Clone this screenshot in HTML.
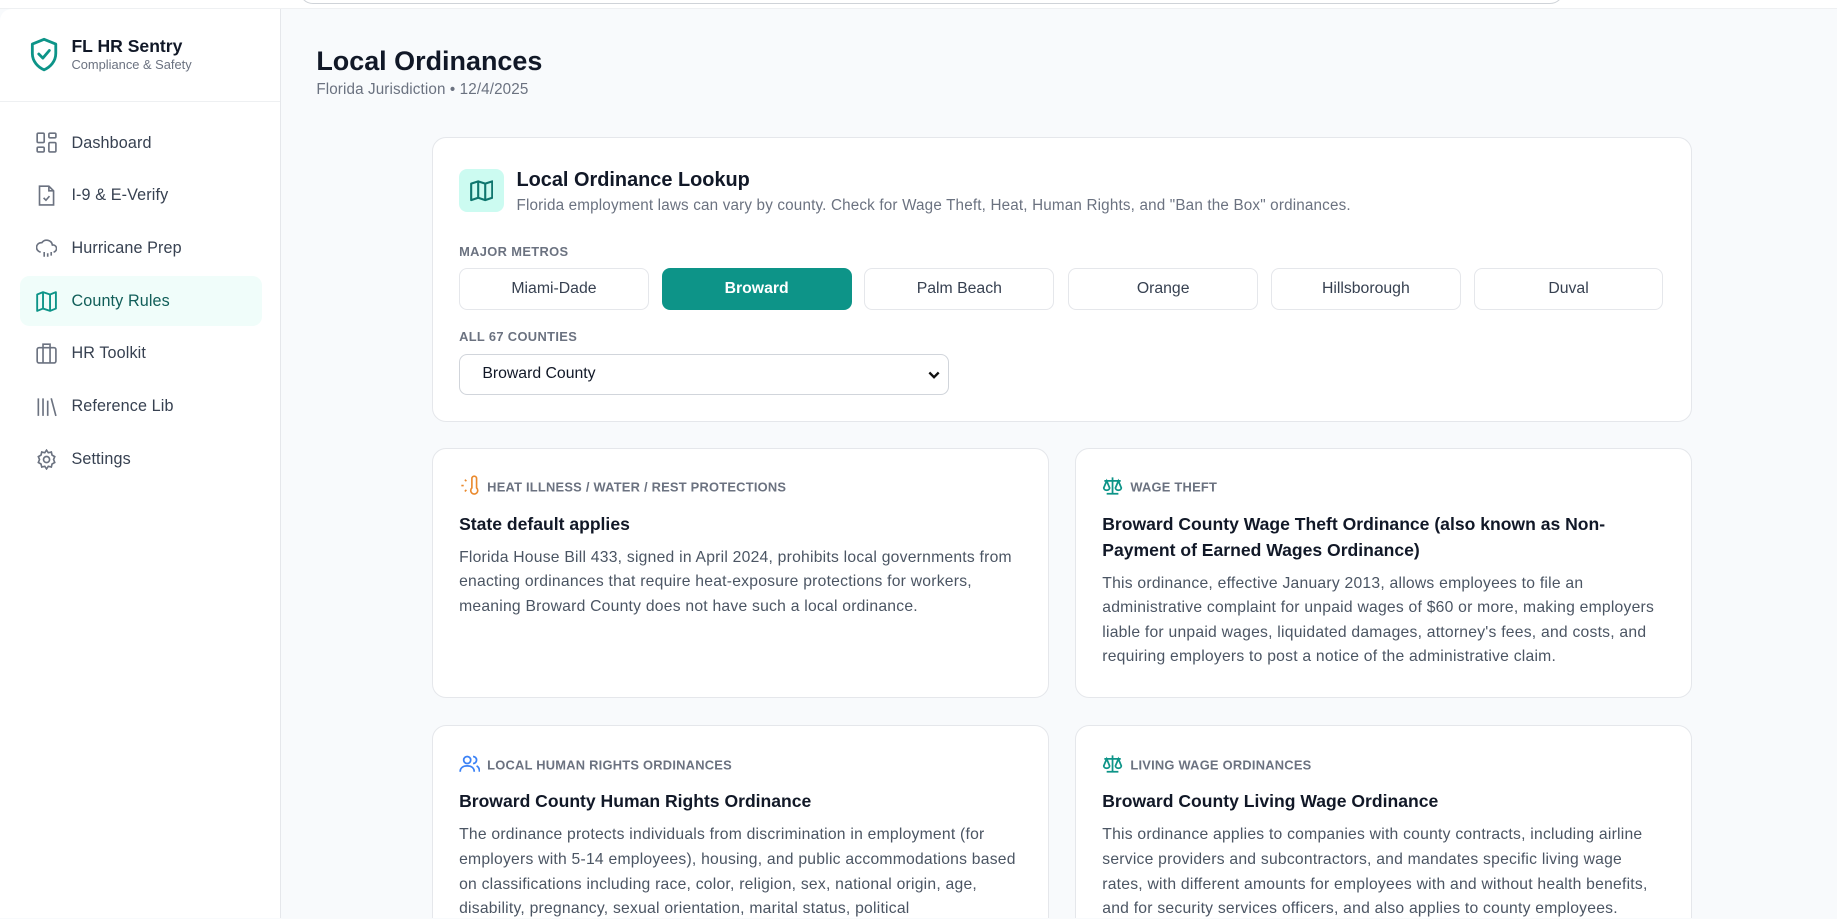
<!DOCTYPE html>
<html><head><meta charset="utf-8">
<style>
html{zoom:1.17156;overflow:hidden;height:784px}
*{box-sizing:border-box;margin:0;padding:0}
body{width:1568px;height:784px;overflow:hidden;background:#f8fafc;font-family:"Liberation Sans",Arial,sans-serif;color:#111827;position:relative}
.top{position:absolute;left:0;top:0;width:1568px;height:8px;background:#fff;border-bottom:1px solid #eef0f2}
.top .bar{position:absolute;left:255px;top:-20px;width:1080px;height:23px;border:1px solid #cfd3d8;border-radius:0 0 12px 12px;background:#fff}
.side{position:absolute;left:0;top:8px;width:240px;height:776px;background:#fff;border-right:1px solid #e5e7eb;border-top-left-radius:10px}
.brand{height:79px;border-bottom:1px solid #eef0f2;position:relative}
.brand svg{position:absolute;left:26px;top:24px}
.brand .t{position:absolute;left:61px;top:23px;font-size:15px;font-weight:bold;color:#111827}
.brand .s{position:absolute;left:61px;top:41px;font-size:11px;color:#6b7280}
.nav{position:absolute;left:0;width:240px;height:42px}
.nav svg{position:absolute;left:31px;top:12px}
.nav span{position:absolute;left:61px;top:13px;font-size:13.8px;color:#374151;letter-spacing:.1px}
.nav.act{left:17px;width:207px;background:#f0fdfa;border-radius:8px}
.nav.act svg{left:14px}.nav.act span{left:44px;color:#115e59}
h1{position:absolute;left:270px;top:39px;font-size:23px;font-weight:bold;color:#111827}
.sub{position:absolute;left:270px;top:69px;font-size:13px;color:#6b7280;letter-spacing:.1px}
.card{position:absolute;background:#fff;border:1px solid #e5e7eb;border-radius:12px}
.ib{position:absolute;left:22px;top:26px;width:38px;height:37px;background:#ccfbf1;border-radius:7px}
.ib svg{position:absolute;left:9px;top:9px}
.ct{position:absolute;left:71px;top:26px;font-size:17px;font-weight:bold}
.cd{position:absolute;left:71px;top:50px;font-size:13px;color:#6b7280;letter-spacing:.15px}
.lbl{position:absolute;left:22px;font-size:11px;font-weight:bold;color:#6b7280;letter-spacing:.3px}
.btn{position:absolute;top:111px;width:162px;height:36px;border:1px solid #e5e7eb;border-radius:7px;text-align:center;line-height:34px;font-size:13.5px;color:#374151;background:#fff}
.btn.a{background:#0d9488;border-color:#0d9488;color:#fff;font-weight:bold}
.sel{position:absolute;left:22px;top:184px;width:418px;height:35px;border:1px solid #d1d5db;border-radius:7px;font-size:13.5px;line-height:33px;padding-left:19px;color:#111827}
.sel svg{position:absolute;right:6px;top:12px}
.oc .h{position:absolute;left:22px;top:23px;font-size:11px;font-weight:bold;color:#6b7280;letter-spacing:.2px}
.oc .h svg{vertical-align:-4px;margin-right:6px}
.oc .ti{position:absolute;left:22px;top:54px;right:40px;font-size:15px;font-weight:bold;line-height:22px;color:#111827}
.oc p{position:absolute;left:22px;right:22px;font-size:13.4px;line-height:21px;color:#4b5563;letter-spacing:.2px}
.cut{border-bottom:none;border-bottom-left-radius:0;border-bottom-right-radius:0}
</style></head><body>
<div class="top"><div class="bar"></div></div>
<div class="side">
 <div class="brand">
  <svg width="24" height="30" viewBox="0 0 24 30" fill="none" stroke="#0d9488" stroke-width="2.4" stroke-linejoin="round"><path d="M12 2 L22 6 V14 C22 21 17 26 12 28 C7 26 2 21 2 14 V6 Z"/><path d="M7.5 14.5 L11 18 L16.5 11.5" stroke-linecap="round"/></svg>
  <div class="t">FL HR Sentry</div><div class="s">Compliance &amp; Safety</div>
 </div>
 <div class="nav" style="top:93px"><svg width="18" height="18" viewBox="0 0 18 18" fill="none" stroke="#6b7280" stroke-width="1.4"><rect x="1" y="1" width="6" height="8" rx="1"/><rect x="11" y="1" width="6" height="4" rx="1"/><rect x="11" y="9" width="6" height="8" rx="1"/><rect x="1" y="13" width="6" height="4" rx="1"/></svg><span>Dashboard</span></div>
 <div class="nav" style="top:138px"><svg width="18" height="18" viewBox="0 0 18 18" fill="none" stroke="#6b7280" stroke-width="1.4"><path d="M3 1h8l4 4v12H3z"/><path d="M11 1v4h4M6.5 11l2 2 3-3.5"/></svg><span>I-9 &amp; E-Verify</span></div>
 <div class="nav" style="top:183px"><svg width="18" height="18" viewBox="0 0 18 18" fill="none" stroke="#6b7280" stroke-width="1.4"><path d="M4 12a4 4 0 0 1 1-8 5 5 0 0 1 9 2 3 3 0 0 1 1 6"/><path d="M7 12v4M10 13v3M13 12v3"/></svg><span>Hurricane Prep</span></div>
 <div class="nav act" style="top:228px"><svg width="18" height="18" viewBox="0 0 18 18" fill="none" stroke="#0d9488" stroke-width="1.6" stroke-linejoin="round"><path d="M1 3l5-2 6 2 5-2v14l-5 2-6-2-5 2z"/><path d="M6 1v14M12 3v14"/></svg><span>County Rules</span></div>
 <div class="nav" style="top:273px"><svg width="18" height="18" viewBox="0 0 18 18" fill="none" stroke="#6b7280" stroke-width="1.4"><rect x="1" y="4" width="16" height="13" rx="1.5"/><path d="M6 4V1h6v3M6 4v13M12 4v13"/></svg><span>HR Toolkit</span></div>
 <div class="nav" style="top:318px"><svg width="18" height="18" viewBox="0 0 18 18" fill="none" stroke="#6b7280" stroke-width="1.4"><path d="M2 2v15M6 2v15M10 4v13M13 2l4 15"/></svg><span>Reference Lib</span></div>
 <div class="nav" style="top:363px"><svg width="18" height="18" viewBox="0 0 18 18" fill="none" stroke="#6b7280" stroke-width="1.4"><circle cx="9" cy="9" r="2.6"/><path d="M9 1l1.5 2.2 2.6-.6.6 2.6L16 6.5 15 9l1 2.5-2.3 1.3-.6 2.6-2.6-.6L9 17l-1.5-2.2-2.6.6-.6-2.6L2 11.5 3 9 2 6.5l2.3-1.3.6-2.6 2.6.6z"/></svg><span>Settings</span></div>
</div>

<h1>Local Ordinances</h1>
<div class="sub">Florida Jurisdiction • 12/4/2025</div>

<div class="card" style="left:369px;top:117px;width:1075px;height:243px">
 <div class="ib"><svg width="20" height="20" viewBox="0 0 20 20" fill="none" stroke="#0f766e" stroke-width="1.8" stroke-linejoin="round"><path d="M1 4l6-2 6 2 6-2v14l-6 2-6-2-6 2z"/><path d="M7 2v14M13 4v14"/></svg></div>
 <div class="ct">Local Ordinance Lookup</div>
 <div class="cd">Florida employment laws can vary by county. Check for Wage Theft, Heat, Human Rights, and "Ban the Box" ordinances.</div>
 <div class="lbl" style="top:90px">MAJOR METROS</div>
 <div class="btn" style="left:22px">Miami-Dade</div>
 <div class="btn a" style="left:195px">Broward</div>
 <div class="btn" style="left:368px">Palm Beach</div>
 <div class="btn" style="left:542px">Orange</div>
 <div class="btn" style="left:715px">Hillsborough</div>
 <div class="btn" style="left:888px">Duval</div>
 <div class="lbl" style="top:163px">ALL 67 COUNTIES</div>
 <div class="sel">Broward County<svg width="12" height="10" viewBox="0 0 12 10" fill="none" stroke="#111" stroke-width="2"><path d="M2 3l4 4 4-4"/></svg></div>
</div>

<div class="card oc" style="left:369px;top:382px;width:526px;height:214px">
 <div class="h"><svg width="18" height="18" viewBox="0 0 18 18" fill="none" stroke="#ea8a2e" stroke-width="1.4"><path d="M11 3a2 2 0 0 1 4 0v8a3 3 0 1 1-4 0z"/><path d="M2 9h2M5 4l1.3 1.3M5 14l1.3-1.3M7 9a1 1 0 0 1 0 0"/></svg>HEAT ILLNESS / WATER / REST PROTECTIONS</div>
 <div class="ti">State default applies</div>
 <p style="top:83px">Florida House Bill 433, signed in April 2024, prohibits local governments from enacting ordinances that require heat-exposure protections for workers, meaning Broward County does not have such a local ordinance.</p>
</div>
<div class="card oc" style="left:918px;top:382px;width:526px;height:214px">
 <div class="h"><svg width="18" height="18" viewBox="0 0 18 18" fill="none" stroke="#0d9488" stroke-width="1.5"><path d="M9 2v14M4 16h10M2 5h14M4 5l-2.5 6a2.5 2 0 0 0 5 0zM14 5l-2.5 6a2.5 2 0 0 0 5 0z"/></svg>WAGE THEFT</div>
 <div class="ti">Broward County Wage Theft Ordinance (also known as Non-Payment of Earned Wages Ordinance)</div>
 <p style="top:105px">This ordinance, effective January 2013, allows employees to file an administrative complaint for unpaid wages of $60 or more, making employers liable for unpaid wages, liquidated damages, attorney's fees, and costs, and requiring employers to post a notice of the administrative claim.</p>
</div>
<div class="card oc cut" style="left:369px;top:619px;width:526px;height:165px">
 <div class="h"><svg width="18" height="18" viewBox="0 0 18 18" fill="none" stroke="#3b82f6" stroke-width="1.5"><circle cx="7" cy="6" r="3"/><path d="M1 16c0-3.5 2.7-5 6-5s6 1.5 6 5M12 3a3 3 0 0 1 0 6M15 11c1.5.7 2.5 2.3 2.5 5"/></svg>LOCAL HUMAN RIGHTS ORDINANCES</div>
 <div class="ti">Broward County Human Rights Ordinance</div>
 <p style="top:83px">The ordinance protects individuals from discrimination in employment (for employers with 5-14 employees), housing, and public accommodations based on classifications including race, color, religion, sex, national origin, age, disability, pregnancy, sexual orientation, marital status, political</p>
</div>
<div class="card oc cut" style="left:918px;top:619px;width:526px;height:165px">
 <div class="h"><svg width="18" height="18" viewBox="0 0 18 18" fill="none" stroke="#0d9488" stroke-width="1.5"><path d="M9 2v14M4 16h10M2 5h14M4 5l-2.5 6a2.5 2 0 0 0 5 0zM14 5l-2.5 6a2.5 2 0 0 0 5 0z"/></svg>LIVING WAGE ORDINANCES</div>
 <div class="ti">Broward County Living Wage Ordinance</div>
 <p style="top:83px">This ordinance applies to companies with county contracts, including airline service providers and subcontractors, and mandates specific living wage rates, with different amounts for employees with and without health benefits, and for security services officers, and also applies to county employees.</p>
</div>
</body></html>
